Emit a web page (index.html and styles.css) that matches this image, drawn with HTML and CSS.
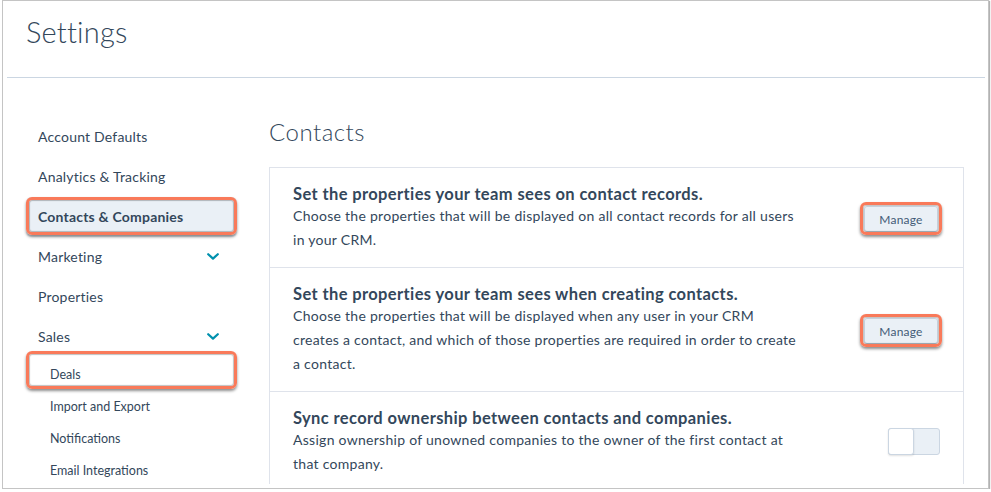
FILE: index.html
```html
<!DOCTYPE html>
<html lang="en">
<head>
<meta charset="utf-8">
<title>Settings</title>
<link rel="stylesheet" href="styles.css">
</head>
<body>
<div class="window">
  <header class="page-header">
    <h1 class="page-title">Settings</h1>
  </header>
  <hr class="divider">
  <div class="layout">
    <nav class="sidebar">
      <a class="nav-item">Account Defaults</a>
      <a class="nav-item">Analytics &amp; Tracking</a>
      <a class="nav-item nav-item--active annotated">Contacts &amp; Companies</a>
      <a class="nav-item">Marketing
        <svg class="chevron" viewBox="0 0 12 7" width="12" height="7"><path d="M1.2 1.2 L6 5.6 L10.8 1.2" fill="none" stroke="#0091ae" stroke-width="2.2" stroke-linecap="round" stroke-linejoin="round"/></svg>
      </a>
      <a class="nav-item">Properties</a>
      <a class="nav-item">Sales
        <svg class="chevron" viewBox="0 0 12 7" width="12" height="7"><path d="M1.2 1.2 L6 5.6 L10.8 1.2" fill="none" stroke="#0091ae" stroke-width="2.2" stroke-linecap="round" stroke-linejoin="round"/></svg>
      </a>
      <a class="nav-sub annotated annotated--deals">Deals</a>
      <a class="nav-sub">Import and Export</a>
      <a class="nav-sub">Notifications</a>
      <a class="nav-sub">Email Integrations</a>
    </nav>
    <main class="content">
      <h2 class="section-title">Contacts</h2>
      <div class="card">
        <div class="row">
          <div class="row-text">
            <h3 class="row-title">Set the properties your team sees on contact records.</h3>
            <p class="row-desc">Choose the properties that will be displayed on all contact records for all users in your CRM.</p>
          </div>
          <button class="btn annotated annotated--btn">Manage</button>
        </div>
        <div class="row">
          <div class="row-text">
            <h3 class="row-title">Set the properties your team sees when creating contacts.</h3>
            <p class="row-desc">Choose the properties that will be displayed when any user in your CRM creates a contact, and which of those properties are required in order to create a contact.</p>
          </div>
          <button class="btn annotated annotated--btn">Manage</button>
        </div>
        <div class="row">
          <div class="row-text">
            <h3 class="row-title">Sync record ownership between contacts and companies.</h3>
            <p class="row-desc">Assign ownership of unowned companies to the owner of the first contact at that company.</p>
          </div>
          <span class="toggle"><span class="toggle-knob"></span></span>
        </div>
      </div>
    </main>
  </div>
</div>
</body>
</html>
```

FILE: styles.css
```css
* { box-sizing: border-box; }

html, body {
  margin: 0;
  padding: 0;
  background: #ffffff;
}

body {
  font-family: "Lato", "Open Sans", sans-serif;
  color: #33475b;
}

.window {
  width: 987px;
  height: 489px;
  margin-left: 2px;
  border: 1px solid #c4c4c4;
  box-shadow: 1px 1px 1px rgba(0, 0, 0, 0.3);
  background: #ffffff;
  overflow: hidden;
}

.page-header {
  padding: 13px 0 0 23px;
}

.page-title {
  margin: 0;
  font-size: 29px;
  line-height: 36px;
  font-weight: 300;
  color: #33475b;
  letter-spacing: 0.2px;
}

.divider {
  margin: 27px 3px 0 4px;
  border: 0;
  border-top: 1px solid #cbd6e2;
  height: 0;
}

.layout {
  display: flex;
  gap: 32px;
  height: 406px;
  padding: 39px 0 0 23px;
  overflow: hidden;
}

.sidebar {
  width: 211px;
  flex: none;
  display: flex;
  flex-direction: column;
}

.nav-item {
  position: relative;
  display: flex;
  align-items: center;
  justify-content: space-between;
  height: 40px;
  padding: 0 18px 0 12px;
  font-size: 14px;
  letter-spacing: 0.2px;
  color: #33475b;
  text-decoration: none;
}

.nav-item--active {
  font-weight: 700;
  background: #eaf0f6;
  border-radius: 5px;
}

.chevron {
  display: block;
}

.nav-sub {
  position: relative;
  display: flex;
  align-items: center;
  height: 32px;
  padding: 4px 0 0 24px;
  font-size: 12.5px;
  color: #33475b;
}

.annotated::after {
  content: "";
  position: absolute;
  inset: 0 0 2px 0;
  border: 3px solid #f97a5a;
  border-radius: 6px;
  box-shadow: 0 2px 3px rgba(0, 0, 0, 0.45), inset 0 0 1px 1px rgba(0, 0, 0, 0.25);
  pointer-events: none;
}

.annotated--deals::after {
  inset: -5px 0 -1px 0;
}

.content {
  width: 695px;
  flex: none;
}

.section-title {
  margin: 0 0 20px 0;
  font-size: 24px;
  line-height: 30px;
  font-weight: 300;
  letter-spacing: 0.5px;
  color: #33475b;
}

.card {
  border: 1px solid #dfe3eb;
}

.row {
  display: flex;
  align-items: center;
  justify-content: space-between;
  padding: 16px 25px 15px 23px;
}

.row + .row {
  border-top: 1px solid #dfe3eb;
}

.row-text {
  width: 504px;
}

.row-title {
  margin: 0;
  font-size: 16.5px;
  line-height: 20px;
  font-weight: 700;
  letter-spacing: 0.38px;
  color: #33475b;
  white-space: nowrap;
}

.row-desc {
  margin: 0;
  font-size: 14px;
  line-height: 24px;
  letter-spacing: 0.28px;
  color: #33475b;
}

.btn {
  position: relative;
  width: 74px;
  height: 26px;
  padding: 0;
  background: #eaf0f6;
  border: 1px solid #cbd6e2;
  border-radius: 3px;
  font-family: inherit;
  font-size: 12px;
  letter-spacing: 0.2px;
  color: #425b76;
  margin-top: 2px;
}

.annotated--btn::after {
  inset: -5px -5px -4px -5px;
}

.toggle {
  display: flex;
  width: 52px;
  height: 27px;
  margin-top: -2px;
  margin-right: -2px;
  background: #eaf0f6;
  border: 1px solid #cbd6e2;
  border-radius: 3px;
}

.toggle-knob {
  display: block;
  width: 26px;
  height: 27px;
  margin: -1px 0 0 -1px;
  background: #ffffff;
  border: 1px solid #cbd6e2;
  border-radius: 3px;
  box-shadow: 0 1px 2px rgba(0, 0, 0, 0.12);
}
```
